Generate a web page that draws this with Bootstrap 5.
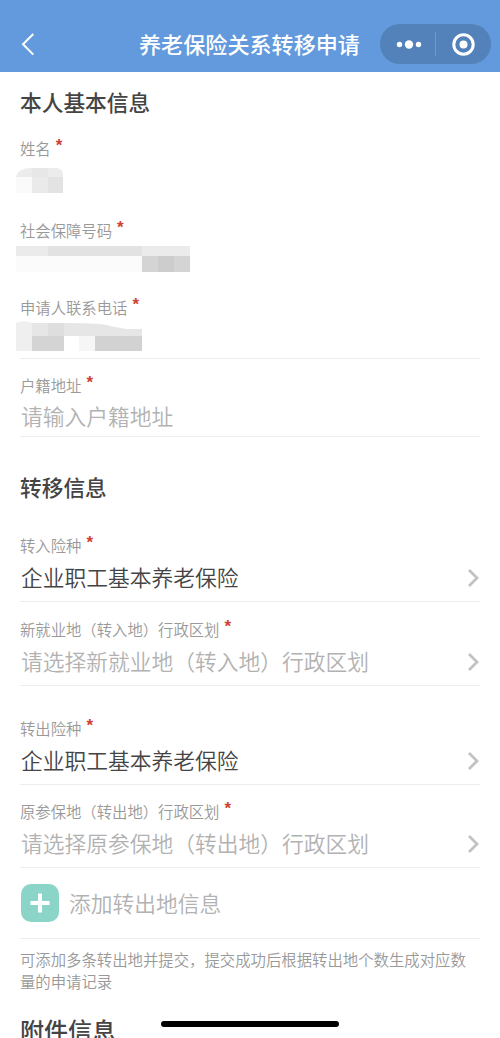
<!DOCTYPE html>
<html lang="zh-CN">
<head>
<meta charset="utf-8">
<meta name="viewport" content="width=device-width, initial-scale=1">
<title>养老保险关系转移申请</title>
<link href="https://cdn.jsdelivr.net/npm/bootstrap@5.3.0/dist/css/bootstrap.min.css" rel="stylesheet">
<style>
body{font-family:"Noto Sans CJK SC",sans-serif;color:#484848;background:#fff;height:1038px;overflow:hidden}
.topbar{height:72px;background:#629add;padding:24px 9px 0 20px}
.topbar h1{font-size:22.1px;line-height:39px;font-weight:500;color:#fff;margin-left:101px}
.capsule{width:111px;height:40px;background:#5282b9}
.form-page{padding:15px 20px 0}
.sect{font-size:21.7px;line-height:30px;height:30px;font-weight:500;color:#444}
.sect-end{font-size:24px}
.field{border-bottom:1px solid transparent}
.field.lined,.add-row{border-bottom-color:#ededed}
.cap{font-size:15.35px;line-height:22px;height:24px;color:#999;font-weight:350}
.cap b{color:#cf3f35;font:bold 17px/12px "Liberation Sans",sans-serif;margin-left:5px;position:relative;top:-4px}
.val{font-size:21.75px;line-height:30px;height:32px;margin:4px 0 7px;padding-left:1px;font-weight:350;color:#444}
.hint{color:#b2b2b2}
.mask{display:block;margin-left:-4px}
.add-row{height:71px;border-bottom:1px solid #ededed;padding-left:1px;font-size:21.75px;font-weight:350}
.note{font-size:15.38px;line-height:22px;color:#999;font-weight:350;margin:9px 8px 23px 0}
.home-bar{width:178px;height:6px;left:161px;top:1021px;background:#000}
</style>
</head>
<body>
<header class="topbar d-flex">
  <svg width="18" height="40" viewBox="0 0 18 40" fill="none" stroke="#fff" stroke-width="2"><path d="M13.300 10 3 20.300 13.300 30.600"/></svg>
  <h1 class="mb-0 text-nowrap flex-grow-1">养老保险关系转移申请</h1>
  <div class="capsule rounded-pill flex-shrink-0">
    <svg class="d-block" width="111" height="40" viewBox="0 0 111 40" fill="#fff"><circle cx="19.500" cy="20.500" r="2.700"/><circle cx="29" cy="20.500" r="4.200"/><circle cx="38.500" cy="20.500" r="2.700"/><path d="M55 8h1v24h-1z" fill="#7099ca"/><circle cx="83.500" cy="20.500" r="9.700" fill="none" stroke="#fff" stroke-width="3"/><circle cx="83.500" cy="20.500" r="4"/></svg>
  </div>
</header>
<main class="form-page">
  <h2 class="sect mb-0">本人基本信息</h2>
  <div class="field" style="margin-top:20px;height:82px">
    <div class="cap">姓名<b>*</b></div>
    <svg class="mask" style="margin-top:7px" width="48" height="26"><path d="M0 9Q2 0 16 0H41Q46 1 47 5V9Z" fill="#ececec"/><path d="M16 0H32V9H16Z" fill="#e7e7e7"/><path d="M0 9h16v16H0z" fill="#fafafa"/><path d="M16 9h16v16H16z" fill="#eaeaea"/><path d="M32 9h15v16H32z" fill="#e3e3e3"/></svg>
  </div>
  <div class="field" style="height:77px">
    <div class="cap">社会保障号码<b>*</b></div>
    <svg class="mask" style="margin-top:3px" width="174" height="26"><path d="M0 0h174v10H0z" fill="#ebebeb"/><path d="M32 0h94v10H32z" fill="#e2e2e2"/><path d="M0 10h126v16H0z" fill="#fbfbfb"/><path d="M126 10h48v16h-48z" fill="#d4d4d4"/><path d="M142 10h16v16h-16z" fill="#cdcdcd"/></svg>
  </div>
  <div class="field lined" style="height:63px">
    <div class="cap">申请人联系电话<b>*</b></div>
    <svg class="mask" style="margin-top:1px" width="127" height="31"><path d="M0 2Q8-1 16 2H48Q90 2 94 5L110 8H126V15H0Z" fill="#e6e6e6"/><path d="M0 2Q8-1 16 2V30H0Z" fill="#efefef"/><path d="M32 2h16v13H32z" fill="#dedede"/><path d="M16 15h32v15H16z" fill="#d4d4d4"/><path d="M63 15h16v15H63z" fill="#f6f6f6"/><path d="M79 15h47v15H79z" fill="#d2d2d2"/></svg>
  </div>
  <div class="field lined" style="margin-top:15px;height:63px">
    <div class="cap">户籍地址<b>*</b></div>
    <div class="val hint" style="margin-top:3px">请输入户籍地址</div>
  </div>

  <h2 class="sect mb-0" style="margin-top:35px">转移信息</h2>
  <div class="field lined" style="margin-top:32px">
    <div class="cap">转入险种<b>*</b></div>
    <div class="val d-flex justify-content-between"><span>企业职工基本养老保险</span><svg class="align-self-center" width="14" height="20" fill="none" stroke="#c2c2c2" stroke-width="2.800"><path d="m3 2 8 8-8 8"/></svg></div>
  </div>
  <div class="field lined" style="margin-top:16px">
    <div class="cap">新就业地（转入地）行政区划<b>*</b></div>
    <div class="val hint d-flex justify-content-between"><span>请选择新就业地（转入地）行政区划</span><svg class="align-self-center" width="14" height="20" fill="none" stroke="#c2c2c2" stroke-width="2.800"><path d="m3 2 8 8-8 8"/></svg></div>
  </div>
  <div class="field lined" style="margin-top:31px">
    <div class="cap">转出险种<b>*</b></div>
    <div class="val d-flex justify-content-between"><span>企业职工基本养老保险</span><svg class="align-self-center" width="14" height="20" fill="none" stroke="#c2c2c2" stroke-width="2.800"><path d="m3 2 8 8-8 8"/></svg></div>
  </div>
  <div class="field lined" style="margin-top:15px">
    <div class="cap">原参保地（转出地）行政区划<b>*</b></div>
    <div class="val hint d-flex justify-content-between"><span>请选择原参保地（转出地）行政区划</span><svg class="align-self-center" width="14" height="20" fill="none" stroke="#c2c2c2" stroke-width="2.800"><path d="m3 2 8 8-8 8"/></svg></div>
  </div>
  <div class="add-row hint d-flex align-items-center">
    <svg width="38" height="38" style="margin-right:10px"><rect width="38" height="38" rx="10" fill="#8bd5c8"/><path d="M19 9.500v19M9.500 19h19" stroke="#fff" stroke-width="4"/></svg>添加转出地信息
  </div>
  <p class="note">可添加多条转出地并提交，提交成功后根据转出地个数生成对应数量的申请记录</p>
  <h2 class="sect sect-end mb-0">附件信息</h2>
</main>
<div class="home-bar position-fixed rounded-pill"></div>
<script src="https://cdn.jsdelivr.net/npm/bootstrap@5.3.0/dist/js/bootstrap.bundle.min.js"></script>
</body>
</html>
